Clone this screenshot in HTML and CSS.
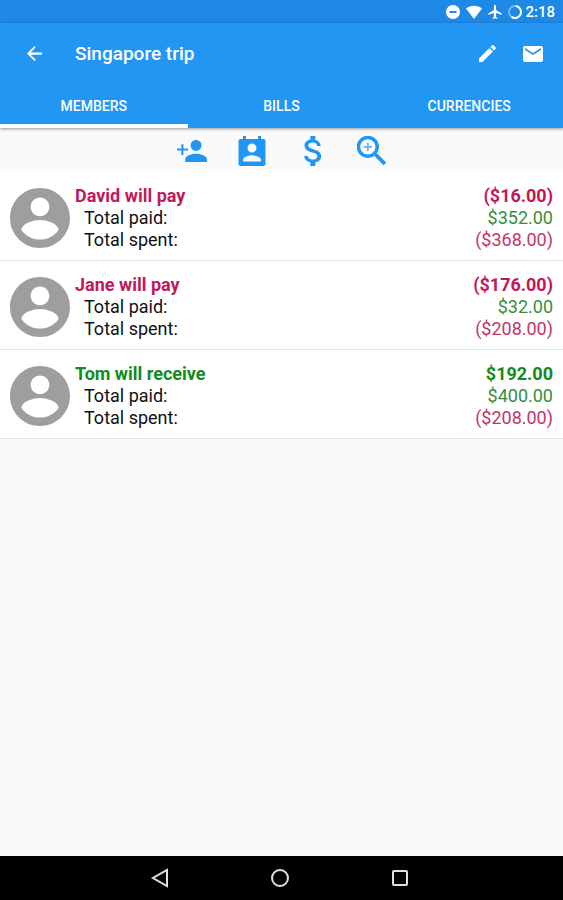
FILE: index.html
```html
<!DOCTYPE html>
<html lang="en">
<head>
<meta charset="utf-8">
<meta name="viewport" content="width=device-width, initial-scale=1">
<title>Singapore trip</title>
<link rel="stylesheet" href="styles.css">
</head>
<body>
<svg class="defs" aria-hidden="true">
  <symbol id="account" viewBox="2 2 20 20"><path d="M12 2C6.48 2 2 6.48 2 12s4.48 10 10 10 10-4.48 10-10S17.52 2 12 2zm0 3.200c1.700 0 3.100 1.400 3.100 3.100s-1.400 3.100-3.100 3.100-3.100-1.400-3.100-3.100 1.400-3.100 3.100-3.100zm0 14c-2.500 0-4.800-1.200-6.200-3.200.2-2.200 4-3.300 6.200-3.300s6 1.100 6.200 3.300c-1.400 2-3.700 3.200-6.200 3.200z"/></symbol>
</svg>
<div class="status">
  <svg class="status-icon" viewBox="0 0 14 14"><path fill-rule="evenodd" d="M7 0a7 7 0 1 1 0 14A7 7 0 0 1 7 0zM3.500 6v2h7V6z"/></svg>
  <svg class="status-icon wifi" viewBox="0 0 16 14"><path d="M8 14L0 3.500C4.500-.2 11.500-.2 16 3.500z"/></svg>
  <svg class="status-icon" viewBox="2 2 19 20"><path d="M21 16v-2l-8-5V3.500c0-.83-.67-1.500-1.500-1.500S10 2.670 10 3.500V9l-8 5v2l8-2.500V19l-2 1.500V22l3.500-1 3.500 1v-1.500L13 19v-5.500l8 2.500z"/></svg>
  <svg class="status-icon" viewBox="0 0 14 14"><circle class="battery-track" cx="7" cy="7" r="6"/><path class="battery-level" d="M8 1.100A6 6 0 1 1 3.500 11.900"/></svg>
  <time class="clock">2:18</time>
</div>
<header class="header">
  <div class="toolbar">
    <button class="icon-button" aria-label="Back"><svg class="back-icon" viewBox="4 4 16 16"><path d="M20 10.800H7.830l5.390-5.390L12 4l-8 8 8 8 1.410-1.410L7.830 13.200H20z"/></svg></button>
    <h1 class="title">Singapore trip</h1>
    <button class="icon-button" aria-label="Edit"><svg class="edit-icon" viewBox="3 3 18 18"><path d="M3 17.250V21h3.750L17.810 9.940l-3.750-3.750L3 17.250zM20.710 7.040c.39-.39.39-1.020 0-1.410l-2.340-2.340c-.39-.39-1.020-.39-1.410 0l-1.830 1.830 3.750 3.750 1.830-1.830z"/></svg></button>
    <button class="icon-button" aria-label="Email"><svg class="mail-icon" viewBox="2 4 20 16"><path d="M20 4H4c-1.100 0-1.990.9-1.990 2L2 18c0 1.100.9 2 2 2h16c1.100 0 2-.9 2-2V6c0-1.100-.9-2-2-2zm0 4l-8 5-8-5V6l8 5 8-5v2z"/></svg></button>
  </div>
  <nav class="tabs" role="tablist">
    <button class="tab selected" role="tab" aria-selected="true">MEMBERS</button>
    <button class="tab" role="tab" aria-selected="false">BILLS</button>
    <button class="tab" role="tab" aria-selected="false">CURRENCIES</button>
  </nav>
</header>
<main class="content">
  <div class="actions">
    <button class="action" aria-label="Add member"><svg viewBox="1 1 22 22"><path d="M15 12c2.210 0 4-1.790 4-4s-1.790-4-4-4-4 1.790-4 4 1.790 4 4 4zM5.700 10.200V7H4.200v3.200H1v1.500h3.200v3.200h1.500v-3.200H9v-1.500zM15 14c-2.670 0-8 1.340-8 4v2h16v-2c0-2.660-5.330-4-8-4z"/></svg></button>
    <button class="action" aria-label="Contacts"><svg viewBox="2 1 20 20"><path d="M19.500 3H18V1h-2v2H8V1H6v2H4.500C3.600 3 3 3.600 3 4.500v15c0 .9.600 1.500 1.500 1.500h15c.9 0 1.500-.6 1.500-1.500v-15c0-.9-.6-1.500-1.500-1.500zM12 6c1.660 0 3 1.340 3 3s-1.340 3-3 3-3-1.340-3-3 1.340-3 3-3zm6 12H6v-1c0-2 4-3.100 6-3.100s6 1.100 6 3.100v1z"/></svg></button>
    <button class="action" aria-label="Payments"><svg viewBox="2 3 18 18"><path d="M11.800 10.900c-2.270-.59-3-1.200-3-2.150 0-1.090 1.010-1.850 2.700-1.850 1.780 0 2.440.85 2.500 2.100h2.210c-.07-1.720-1.120-3.300-3.210-3.810V3h-3v2.160c-1.940.42-3.500 1.680-3.500 3.610 0 2.310 1.910 3.460 4.700 4.130 2.500.6 3 1.480 3 2.410 0 .69-.49 1.790-2.700 1.790-2.060 0-2.870-.92-2.980-2.100h-2.200c.12 2.190 1.760 3.420 3.680 3.830V21h3v-2.150c1.950-.37 3.500-1.500 3.500-3.550 0-2.840-2.430-3.810-4.700-4.400z"/></svg></button>
    <button class="action" aria-label="Zoom in"><svg viewBox="3 3 18 18"><path d="M15.500 14h-.79l-.28-.27C15.410 12.590 16 11.110 16 9.500 16 5.910 13.090 3 9.500 3S3 5.910 3 9.500 5.910 16 9.500 16c1.610 0 3.090-.59 4.230-1.570l.27.28v.79l5 4.990L20.490 19l-4.990-5zm-6 .5c-2.760 0-5-2.240-5-5s2.240-5 5-5 5 2.240 5 5-2.240 5-5 5z"/><path class="outline" d="M14 14l5.500 5.500"/><circle class="outline" cx="9.500" cy="9.500" r="5.600"/><path class="faint" d="M12 9h-2V7H9v2H7v1h2v2h1v-2h2z"/></svg></button>
  </div>
  <ul class="members">
    <li class="member">
      <svg class="avatar"><use href="#account"/></svg>
      <dl class="balance">
        <div class="line total owes"><dt>David will pay</dt><dd>($16.00)</dd></div>
        <div class="line"><dt>Total paid:</dt><dd class="paid">$352.00</dd></div>
        <div class="line"><dt>Total spent:</dt><dd class="spent">($368.00)</dd></div>
      </dl>
    </li>
    <li class="member">
      <svg class="avatar"><use href="#account"/></svg>
      <dl class="balance">
        <div class="line total owes"><dt>Jane will pay</dt><dd>($176.00)</dd></div>
        <div class="line"><dt>Total paid:</dt><dd class="paid">$32.00</dd></div>
        <div class="line"><dt>Total spent:</dt><dd class="spent">($208.00)</dd></div>
      </dl>
    </li>
    <li class="member">
      <svg class="avatar"><use href="#account"/></svg>
      <dl class="balance">
        <div class="line total owed"><dt>Tom will receive</dt><dd>$192.00</dd></div>
        <div class="line"><dt>Total paid:</dt><dd class="paid">$400.00</dd></div>
        <div class="line"><dt>Total spent:</dt><dd class="spent">($208.00)</dd></div>
      </dl>
    </li>
  </ul>
</main>
<footer class="system-bar">
  <button class="system-button" aria-label="System back"><svg viewBox="0 0 20 20"><path d="M17 2v16L3 10z"/></svg></button>
  <button class="system-button" aria-label="Home"><svg viewBox="0 0 20 20"><circle cx="10" cy="10" r="8"/></svg></button>
  <button class="system-button" aria-label="Recent apps"><svg viewBox="0 0 20 20"><rect x="3" y="3" width="14" height="14" rx="1"/></svg></button>
</footer>
</body>
</html>
```
FILE: styles.css
```css
* {
  box-sizing: border-box;
}

body {
  margin: 0;
  min-height: 100vh;
  display: flex;
  flex-direction: column;
  background: #fafafa;
  color: #111;
  font-family: Roboto, "Liberation Sans", sans-serif;
}

button {
  margin: 0;
  padding: 0;
  border: 0;
  background: none;
  color: inherit;
  font: inherit;
}

svg {
  display: block;
  fill: currentColor;
}

.defs {
  position: absolute;
  width: 0;
  height: 0;
}

.status {
  display: flex;
  align-items: center;
  justify-content: flex-end;
  gap: 6px;
  height: 23px;
  padding: 0 8px;
  background: #1e88e5;
  color: #fff;
}

.status-icon {
  width: 14px;
  height: 14px;
}

.wifi {
  width: 16px;
}

.battery-track,
.battery-level {
  fill: none;
  stroke: currentColor;
  stroke-width: 2;
}

.battery-track {
  opacity: 0.4;
}

.clock {
  margin-left: -3px;
  font-size: 15px;
  font-weight: 500;
}

.header {
  background: #2196f3;
  color: #fff;
  box-shadow: 0 1px 3px rgba(0, 0, 0, 0.4);
  z-index: 1;
}

.toolbar {
  display: flex;
  align-items: center;
  height: 61px;
  padding: 0 8px 0 12px;
}

.icon-button {
  display: grid;
  place-items: center;
  width: 45px;
  height: 45px;
}

.back-icon {
  width: 15px;
  height: 15px;
}

.edit-icon {
  width: 17px;
  height: 17px;
}

.mail-icon {
  width: 20px;
  height: 16px;
}

.title {
  flex: 1;
  margin: 0;
  padding-left: 18px;
  font-size: 19px;
  font-weight: 500;
}

.tabs {
  display: grid;
  grid-template-columns: repeat(3, 1fr);
}

.tab {
  height: 44px;
  border-top: 4px solid transparent;
  border-bottom: 4px solid transparent;
  font-size: 14px;
  font-weight: 500;
}

.selected {
  border-bottom-color: #fff;
}

.content {
  flex: 1;
}

.actions {
  display: flex;
  justify-content: center;
  gap: 30px;
  padding: 8px 0 6px;
  color: #2196f3;
}

.action svg {
  width: 30px;
  height: 30px;
}

.outline {
  fill: none;
  stroke: currentColor;
  stroke-width: 2;
}

.faint {
  opacity: 0.7;
}

.members {
  margin: 0;
  padding: 0;
  list-style: none;
}

.member {
  display: flex;
  align-items: center;
  gap: 5px;
  padding: 13px 10px 9px;
  border-bottom: 1px solid #e4e4e4;
  background: #fff;
}

.avatar {
  width: 60px;
  height: 60px;
  color: #9e9e9e;
}

.balance {
  flex: 1;
  margin: 0;
  font-size: 18px;
  line-height: 22px;
}

.line {
  display: flex;
  justify-content: space-between;
  padding-left: 9px;
}

.line dd {
  margin: 0;
}

.total {
  padding-left: 0;
  font-weight: 700;
}

.owes {
  color: #c2185b;
}

.owed {
  color: #128a1c;
}

.paid {
  color: #388e3c;
}

.spent {
  color: #c2356a;
}

.system-bar {
  display: flex;
  justify-content: center;
  gap: 76px;
  height: 44px;
  padding-right: 3px;
  background: #000;
  color: #e0e0e0;
}

.system-button {
  display: grid;
  place-items: center;
  width: 44px;
}

.system-button svg {
  width: 20px;
  height: 20px;
  fill: none;
  stroke: currentColor;
  stroke-width: 2;
}
```
